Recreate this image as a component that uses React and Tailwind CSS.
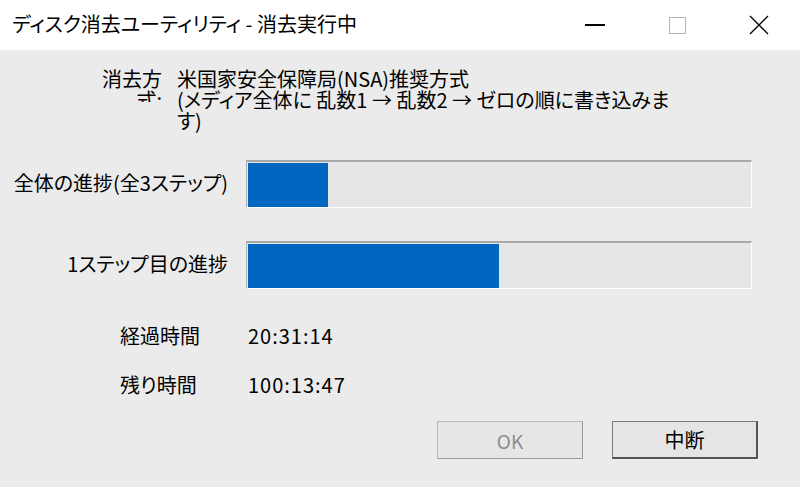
// App.jsx - disk erase progress dialog
export default function App() {
  return (
    <div className="w-[800px] h-[487px] overflow-hidden bg-[#ebebeb] text-black font-['Noto_Sans_CJK_JP','Noto_Sans',sans-serif] [font-feature-settings:'palt'] flex flex-col">
      {/* ===== Title bar ===== */}
      <div className="h-[50px] shrink-0 bg-white flex items-center">
        <div className="flex-1 pl-3 text-[20px] leading-none pb-[2px]">
          ディスク消去ユーティリティ - 消去実行中
        </div>
        <div className="flex h-full">
          <div className="w-[82px] flex items-center justify-center">
            <div className="w-[20px] h-[1.5px] bg-black" />
          </div>
          <div className="w-[82px] flex items-center justify-center">
            <div className="w-[17px] h-[17px] border border-[#b4b4b4]" />
          </div>
          <div className="w-[82px] flex items-center justify-center">
            <svg width="20" height="20" viewBox="0 0 20 20">
              <path d="M1 1 L19 19 M19 1 L1 19" stroke="#000" strokeWidth="1.3" fill="none" />
            </svg>
          </div>
        </div>
      </div>

      {/* ===== Erase method ===== */}
      <div className="mt-[18px] flex text-[20px] leading-[21px]">
        <div className="ml-[98px] w-[64px] h-[34px] overflow-hidden text-right">
          消去方式:
        </div>
        <div className="ml-[15px] whitespace-nowrap">
          <div>米国家安全保障局(NSA)推奨方式</div>
          <div>(メディア全体に 乱数1 → 乱数2 → ゼロの順に書き込みま</div>
          <div>す)</div>
        </div>
      </div>

      {/* ===== Progress bars ===== */}
      <div className="mt-[29px] flex flex-col gap-[33px]">
        {[
          { label: "全体の進捗(全3ステップ)", fill: 80 },
          { label: "1ステップ目の進捗", fill: 251 },
        ].map((row, idx) => (
          <div key={idx} className="flex items-center">
            <div className="w-[228px] text-right text-[20px] leading-none pb-[2px]">
              {row.label}
            </div>
            <div className="ml-[18px] w-[506px] h-[48px] bg-[#e6e6e6] border-t-2 border-l border-t-[#a9a9a9] border-l-[#b0b0b0] border-r border-b border-r-white border-b-white pt-[1px] pl-[1px]">
              <div className="h-full bg-[#0067c0]" style={{ width: row.fill }} />
            </div>
          </div>
        ))}
      </div>

      {/* ===== Times ===== */}
      <div className="mt-[35px] flex flex-col gap-[25px] text-[20px] leading-[24px]">
        <div className="flex">
          <div className="ml-[120px] w-[128px]">経過時間</div>
          <div className="tracking-[1px]">20:31:14</div>
        </div>
        <div className="flex">
          <div className="ml-[120px] w-[128px]">残り時間</div>
          <div className="tracking-[1px]">100:13:47</div>
        </div>
      </div>

      {/* ===== Buttons ===== */}
      <div className="mt-[24px] flex justify-end gap-[29px] pr-[42px]">
        <button className="w-[146px] h-[38px] bg-[#e6e6e6] border border-[#b9b9b9] border-b-[#9a9a9a] border-r-[#9a9a9a] text-[#8c8c8c] text-[19px] leading-none">
          OK
        </button>
        <button className="w-[146px] h-[38px] bg-[#e5e5e5] border border-[#7a7a7a] border-b-2 border-r-2 border-b-[#555] border-r-[#555] text-black text-[20px] leading-none">
          中断
        </button>
      </div>
    </div>
  );
}
